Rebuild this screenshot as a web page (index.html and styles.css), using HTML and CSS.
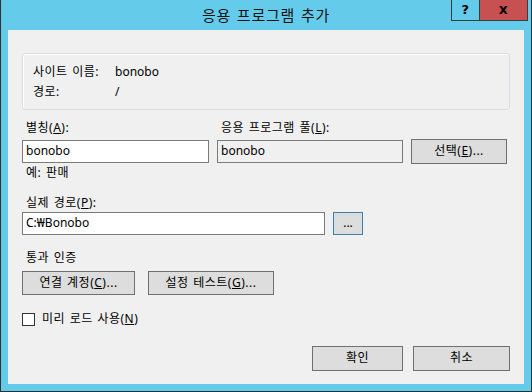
FILE: index.html
```html
<!DOCTYPE html>
<html lang="ko">
<head>
    <meta charset="UTF-8">
    <title>응용 프로그램 추가</title>
    <link rel="stylesheet" href="styles.css">
</head>
<body>

<div class="window">
    <div class="titlebar">
        <div></div>
        <div class="title">응용 프로그램 추가</div>
        <div class="caption-buttons">
            <div class="cap-btn help">?</div>
            <div class="cap-btn close">x</div>
        </div>
    </div>

    <div class="client">
        <div class="groupbox">
            <div class="info-row">
                <span class="info-label">사이트 이름:</span>
                <span class="value">bonobo</span>
            </div>
            <div class="info-row">
                <span class="info-label">경로:</span>
                <span class="value">/</span>
            </div>
        </div>

        <div class="field-grid">
            <div class="label">별칭(<u>A</u>):</div>
            <div class="label">응용 프로그램 풀(<u>L</u>):</div>
            <div></div>
            <div class="textbox">bonobo</div>
            <div class="textbox readonly">bonobo</div>
            <div class="btn">선택(<u>E</u>)...</div>
            <div class="hint">예: 판매</div>
        </div>

        <div class="label path-label">실제 경로(<u>P</u>):</div>
        <div class="path-row">
            <div class="textbox path">C:₩Bonobo</div>
            <div class="btn browse">...</div>
        </div>

        <div class="label auth-label">통과 인증</div>
        <div class="auth-row">
            <div class="btn connect">연결 계정(<u>C</u>)...</div>
            <div class="btn test">설정 테스트(<u>G</u>)...</div>
        </div>

        <div class="check-row">
            <div class="checkbox"></div>
            <div class="check-text">미리 로드 사용(<u>N</u>)</div>
        </div>

        <div class="dialog-buttons">
            <div class="btn ok">확인</div>
            <div class="btn cancel">취소</div>
        </div>
    </div>
</div>

</body>
</html>
```

FILE: styles.css
```css
* {
    box-sizing: border-box;
}

body {
    margin: 0;
    width: 532px;
    height: 392px;
    font-family: "Noto Sans", "Noto Sans CJK KR", sans-serif;
    font-size: 12px;
    letter-spacing: 0.5px;
    word-spacing: 1px;
    color: #000;
}

.window {
    width: 532px;
    height: 392px;
    background: #65cbea;
    border: 1px solid #2f2f2f;
    border-top: none;
    display: flex;
    flex-direction: column;
}

.titlebar {
    height: 30px;
    display: grid;
    grid-template-columns: 1fr auto 1fr;
    align-items: start;
}

.title {
    font-size: 15px;
    line-height: 30px;
    color: #111;
    letter-spacing: 0.8px;
}

.caption-buttons {
    display: flex;
    justify-content: flex-end;
    margin-right: 3px;
}

.cap-btn {
    height: 21px;
    border: 1px solid #3c3c3c;
    border-top: none;
    text-align: center;
    font-family: "DejaVu Sans", sans-serif;
    font-weight: bold;
    line-height: 19px;
}

.cap-btn.help {
    width: 29px;
    font-size: 13px;
}

.cap-btn.close {
    width: 48px;
    border-left: none;
    background: #c75050;
    font-size: 14px;
    line-height: 18px;
}

.client {
    flex: 1;
    margin: 0 7px 7px;
    background: #f0f0f0;
    padding: 0 14px;
}

.groupbox {
    margin-top: 23px;
    height: 57px;
    border: 1px solid #d5dfe5;
    border-radius: 3px;
    box-shadow: inset 1px 1px 0 #fff;
    padding: 8px 0 0 10px;
}

.info-row {
    display: flex;
    line-height: 20px;
}

.info-label {
    width: 82px;
}

.value,
.textbox {
    letter-spacing: 0;
}

.label {
    line-height: 16px;
    padding-left: 4px;
}

.field-grid {
    display: grid;
    grid-template-columns: 187px 186px 96px;
    grid-template-rows: 19px 25px auto;
    column-gap: 8px;
    margin-top: 10px;
}

.textbox {
    height: 23px;
    border: 1px solid #7a7a7a;
    background: #fff;
    line-height: 20px;
    padding-left: 3px;
    align-self: center;
}

.textbox.readonly {
    background: #f0f0f0;
}

.hint {
    line-height: 16px;
    margin-top: 1px;
    padding-left: 4px;
}

.btn {
    height: 25px;
    border: 1px solid #707070;
    background: #dddddd;
    text-align: center;
    line-height: 22px;
}

.path-label {
    margin-top: 14px;
}

.path-row {
    display: flex;
    gap: 8px;
    margin-top: 1px;
}

.textbox.path {
    width: 303px;
}

.btn.browse {
    width: 30px;
    height: 23px;
    border-color: #3c7fb1;
    line-height: 20px;
    letter-spacing: 0;
}

.auth-label {
    margin-top: 15px;
}

.auth-row {
    display: flex;
    gap: 13px;
    margin-top: 5px;
}

.auth-row .btn {
    height: 24px;
    line-height: 21px;
}

.btn.connect {
    width: 113px;
}

.btn.test {
    width: 126px;
}

.check-row {
    display: flex;
    align-items: center;
    gap: 7px;
    margin-top: 16px;
    height: 16px;
}

.checkbox {
    width: 13px;
    height: 13px;
    border: 1px solid #333;
    background: #fff;
}

.check-text {
    line-height: 16px;
}

.dialog-buttons {
    display: flex;
    justify-content: flex-end;
    gap: 10px;
    margin-top: 19px;
}

.btn.ok {
    width: 91px;
}

.btn.cancel {
    width: 97px;
}
```
